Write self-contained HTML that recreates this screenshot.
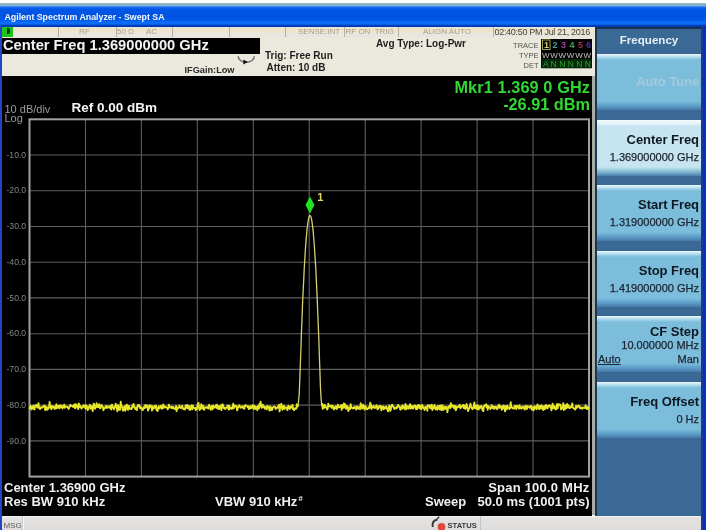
<!DOCTYPE html>
<html><head><meta charset="utf-8">
<style>
html,body{margin:0;padding:0;}
body{width:711px;height:530px;position:relative;overflow:hidden;background:#fff;font-family:"Liberation Sans",sans-serif;}
.a{position:absolute;}
.t{position:absolute;white-space:nowrap;line-height:normal;}
#title{left:0;top:3px;width:706.3px;height:23.5px;background:linear-gradient(to bottom,#b0c8d8 0px,#88b0c8 0.8px,#88b0c8 2.6px,#1a70f8 4px,#0058e8 6px,#0052e0 12px,#0058e8 17px,#0a6cf8 19px,#0a6cf8 21px,#0040b8 22.6px,#0038b0 23.5px);}
#lframe{left:0;top:26px;width:2px;height:504px;background:#2444c8;}
#rframe1{left:701.3px;top:26px;width:2px;height:504px;background:#1a3898;}
#rframe2{left:703.3px;top:26px;width:3px;height:504px;background:#0a2ec4;}
#strip{left:2px;top:26.5px;width:592.5px;height:10.5px;background:linear-gradient(to bottom,#dce6ea 0px,#ece4d0 1.2px,#eee4cc 5px,#e8e8e0 6.5px,#e6e6de 9.5px,#b8b4a8 10.5px);}
.sep{position:absolute;top:0;width:1px;height:10.5px;background:#b8b0a0;}
#green{left:1.8px;top:26.6px;width:11px;height:10.6px;background:#1cc41c;}
#hdr{left:2px;top:37px;width:592.5px;height:39px;background:#ebe9de;}
#cf{left:2px;top:38.4px;width:257.5px;height:16px;background:#000;}
#black{left:2px;top:76px;width:590px;height:439.5px;background:#000;}
#vsep{left:592px;top:76px;width:2.6px;height:439px;background:#a4aca4;}
#panel{left:594.5px;top:26.5px;width:107px;height:489px;background:#3a6996;border-left:2px solid #1e3450;box-sizing:border-box;}
#ptop{left:594.5px;top:26.5px;width:107px;height:2.5px;background:#1a3050;}
.btn{position:absolute;left:596.5px;width:104.8px;height:56px;background:linear-gradient(to bottom,#eef8fc 0px,#b0dcee 3px,#7cbddc 6px,#7cbddc 47px,#5a9cc8 52px,#4878a8 56px);}
.btn.sel{background:linear-gradient(to bottom,#f4fafc 0px,#e4f2f8 4px,#c6e5f0 6px,#c6e5f0 47px,#8cc0d8 51px,#4a80b0 56px);}
#status{left:2px;top:515.5px;width:699.5px;height:14.5px;background:linear-gradient(to bottom,#f4f4f2 0px,#e4e2e0 2px,#e0dedd 12px,#d8d4e0 15px);}
#tbox{left:541px;top:39.2px;width:51px;height:29.3px;background:#000;}
#wrap{position:absolute;left:0;top:0;width:711px;height:530px;overflow:hidden;filter:blur(0.35px);}
</style></head><body><div id="wrap">
<div class="a" id="title"></div>
<div class="a" id="lframe"></div>
<div class="a" id="strip">
  <div class="sep" style="left:55.5px"></div>
  <div class="sep" style="left:113.5px"></div>
  <div class="sep" style="left:169.5px"></div>
  <div class="sep" style="left:226.5px"></div>
  <div class="sep" style="left:282.5px"></div>
  <div class="sep" style="left:342px"></div>
  <div class="sep" style="left:395.5px"></div>
  <div class="sep" style="left:490.5px"></div>
</div>
<div class="a" id="green"></div><div class="a" style="left:6.8px;top:28.3px;width:3.6px;height:6px;background:#0a3a0a;border-radius:0 2px 2px 0"></div>
<div class="a" id="hdr"></div>
<div class="a" id="cf"></div>
<div class="a" id="tbox"></div>
<div class="a" id="black"></div>
<div class="a" id="vsep"></div>
<div class="a" id="panel"></div>
<div class="a" id="ptop"></div>
<div class="btn" style="top:54.0px"></div>
<div class="t" style="right:11.5px;top:74.3px;font-size:13px;color:#a6cadc;font-weight:bold">Auto Tune</div>
<div class="btn sel" style="top:119.6px"></div>
<div class="t" style="right:12.0px;top:131.5px;font-size:13px;color:#0e1822;font-weight:bold;letter-spacing:-0.05px">Center Freq</div>
<div class="t" style="right:12.0px;top:150.7px;font-size:11px;color:#1a2430;-webkit-text-stroke:0.25px #1a2430">1.369000000 GHz</div>
<div class="btn" style="top:185.2px"></div>
<div class="t" style="right:12.0px;top:197.1px;font-size:13px;color:#0e1822;font-weight:bold;letter-spacing:-0.05px">Start Freq</div>
<div class="t" style="right:12.0px;top:216.3px;font-size:11px;color:#1a2430;-webkit-text-stroke:0.25px #1a2430">1.319000000 GHz</div>
<div class="btn" style="top:250.8px"></div>
<div class="t" style="right:12.0px;top:262.7px;font-size:13px;color:#0e1822;font-weight:bold;letter-spacing:-0.05px">Stop Freq</div>
<div class="t" style="right:12.0px;top:281.9px;font-size:11px;color:#1a2430;-webkit-text-stroke:0.25px #1a2430">1.419000000 GHz</div>
<div class="btn" style="top:316.4px"></div>
<div class="t" style="right:12.0px;top:324.0px;font-size:13px;color:#0e1822;font-weight:bold">CF Step</div>
<div class="t" style="right:12.0px;top:339.1px;font-size:11px;color:#1a2430;-webkit-text-stroke:0.25px #1a2430">10.000000 MHz</div>
<div class="t" style="left:598.0px;top:352.9px;font-size:11px;color:#1a2430;text-decoration:underline;-webkit-text-stroke:0.25px #1a2430">Auto</div>
<div class="t" style="right:12.0px;top:352.9px;font-size:11px;color:#1a2430;-webkit-text-stroke:0.25px #1a2430">Man</div>
<div class="btn" style="top:382.0px"></div>
<div class="t" style="right:12.0px;top:393.9px;font-size:13px;color:#0e1822;font-weight:bold;letter-spacing:-0.05px">Freq Offset</div>
<div class="t" style="right:12.0px;top:413.1px;font-size:11px;color:#1a2430;-webkit-text-stroke:0.25px #1a2430">0 Hz</div>
<div class="a" id="status"></div>
<div class="a" id="rframe1"></div>
<div class="a" id="rframe2"></div>
<div class="a" style="left:22px;top:516px;width:1px;height:14px;background:#c8c8c8"></div><div class="a" style="left:23px;top:516px;width:1px;height:14px;background:#f8f8f8"></div>
<div class="a" style="left:480px;top:516px;width:1px;height:14px;background:#c4c4c4"></div>
<svg class="a" style="left:0;top:0" width="711" height="530" viewBox="0 0 711 530">
<g stroke="#5e5e5e" stroke-width="1.1">
<line x1="85.5" y1="119.3" x2="85.5" y2="476.6"/>
<line x1="29.5" y1="155.0" x2="589.0" y2="155.0"/>
<line x1="141.4" y1="119.3" x2="141.4" y2="476.6"/>
<line x1="29.5" y1="190.8" x2="589.0" y2="190.8"/>
<line x1="197.3" y1="119.3" x2="197.3" y2="476.6"/>
<line x1="29.5" y1="226.5" x2="589.0" y2="226.5"/>
<line x1="253.3" y1="119.3" x2="253.3" y2="476.6"/>
<line x1="29.5" y1="262.2" x2="589.0" y2="262.2"/>
<line x1="309.2" y1="119.3" x2="309.2" y2="476.6"/>
<line x1="29.5" y1="297.9" x2="589.0" y2="297.9"/>
<line x1="365.2" y1="119.3" x2="365.2" y2="476.6"/>
<line x1="29.5" y1="333.7" x2="589.0" y2="333.7"/>
<line x1="421.1" y1="119.3" x2="421.1" y2="476.6"/>
<line x1="29.5" y1="369.4" x2="589.0" y2="369.4"/>
<line x1="477.1" y1="119.3" x2="477.1" y2="476.6"/>
<line x1="29.5" y1="405.1" x2="589.0" y2="405.1"/>
<line x1="533.0" y1="119.3" x2="533.0" y2="476.6"/>
<line x1="29.5" y1="440.9" x2="589.0" y2="440.9"/>
</g>
<rect x="29.5" y="119.3" width="559.5" height="357.3" fill="none" stroke="#a0a0a0" stroke-width="2"/>
<polyline points="297.5,407.3 298.1,406.1 298.6,400.0 299.2,394.7 299.7,382.0 300.3,365.6 300.9,349.5 301.4,333.7 302.0,318.9 302.5,305.0 303.1,292.1 303.7,280.2 304.2,269.3 304.8,259.4 305.3,250.5 305.9,242.6 306.5,235.7 307.0,229.8 307.6,224.9 308.1,221.1 308.7,218.2 309.2,216.4 309.8,215.5 310.4,215.7 310.9,216.8 311.5,219.0 312.0,222.2 312.6,226.4 313.2,231.6 313.7,237.8 314.3,245.0 314.8,253.2 315.4,262.4 316.0,272.6 316.5,283.9 317.1,296.1 317.6,309.3 318.2,323.5 318.8,338.7 319.3,354.6 319.9,370.8 320.4,386.2 321.0,397.5 321.6,404.1 322.1,403.1" fill="none" stroke="#d4d070" stroke-width="1.3"/>
<polyline points="29.5,409.3 30.1,406.7 30.6,405.7 31.2,408.1 31.7,409.4 32.3,407.4 32.9,406.5 33.4,405.5 34.0,409.2 34.5,409.4 35.1,406.1 35.7,406.5 36.2,404.8 36.8,405.7 37.3,407.4 37.9,407.7 38.5,403.2 39.0,407.7 39.6,408.5 40.1,409.1 40.7,407.1 41.2,407.1 41.8,407.8 42.4,407.4 42.9,406.8 43.5,406.2 44.0,405.5 44.6,406.9 45.2,410.2 45.7,406.2 46.3,409.6 46.8,407.6 47.4,409.7 48.0,407.3 48.5,408.5 49.1,406.9 49.6,402.0 50.2,407.4 50.8,405.9 51.3,409.4 51.9,407.7 52.4,406.2 53.0,407.4 53.6,406.7 54.1,407.1 54.7,408.9 55.2,406.4 55.8,408.6 56.4,404.3 56.9,408.1 57.5,406.2 58.0,407.3 58.6,405.8 59.2,408.3 59.7,405.7 60.3,407.5 60.8,405.3 61.4,406.3 62.0,407.1 62.5,408.5 63.1,406.0 63.6,406.5 64.2,404.6 64.7,407.9 65.3,406.4 65.9,406.5 66.4,406.8 67.0,406.9 67.5,407.0 68.1,408.2 68.7,408.9 69.2,407.9 69.8,406.3 70.3,404.9 70.9,405.7 71.5,405.6 72.0,406.0 72.6,406.2 73.1,407.0 73.7,406.0 74.3,404.4 74.8,407.8 75.4,408.4 75.9,404.1 76.5,406.9 77.1,405.7 77.6,405.9 78.2,409.1 78.7,403.4 79.3,404.4 79.9,407.0 80.4,406.1 81.0,407.1 81.5,408.7 82.1,407.5 82.7,406.7 83.2,405.5 83.8,406.1 84.3,407.2 84.9,405.1 85.5,408.5 86.0,406.0 86.6,405.5 87.1,407.8 87.7,410.2 88.2,408.7 88.8,406.9 89.4,406.4 89.9,404.8 90.5,408.9 91.0,407.3 91.6,406.2 92.2,407.5 92.7,411.1 93.3,406.0 93.8,403.6 94.4,405.7 95.0,408.8 95.5,407.9 96.1,406.9 96.6,403.3 97.2,406.3 97.8,407.1 98.3,404.8 98.9,407.4 99.4,404.3 100.0,408.4 100.6,408.0 101.1,406.1 101.7,405.0 102.2,406.2 102.8,406.8 103.4,410.2 103.9,408.4 104.5,408.3 105.0,408.1 105.6,406.3 106.2,407.8 106.7,406.0 107.3,407.2 107.8,407.8 108.4,407.1 108.9,406.6 109.5,405.9 110.1,408.1 110.6,407.7 111.2,409.5 111.7,404.7 112.3,404.9 112.9,407.6 113.4,408.1 114.0,409.3 114.5,407.0 115.1,407.0 115.7,403.8 116.2,406.9 116.8,408.5 117.3,411.2 117.9,405.0 118.5,407.0 119.0,409.9 119.6,407.0 120.1,409.9 120.7,401.7 121.3,405.5 121.8,406.4 122.4,407.6 122.9,410.7 123.5,407.5 124.1,409.8 124.6,406.3 125.2,410.7 125.7,408.7 126.3,405.3 126.9,404.6 127.4,409.2 128.0,409.8 128.5,405.9 129.1,405.9 129.7,408.9 130.2,408.4 130.8,408.4 131.3,409.2 131.9,408.4 132.4,405.3 133.0,406.2 133.6,404.0 134.1,407.4 134.7,407.5 135.2,408.9 135.8,407.5 136.4,409.4 136.9,410.1 137.5,406.2 138.0,405.0 138.6,405.9 139.2,405.1 139.7,406.9 140.3,408.4 140.8,407.1 141.4,407.9 142.0,409.1 142.5,410.0 143.1,409.7 143.6,407.3 144.2,407.0 144.8,408.0 145.3,405.0 145.9,407.0 146.4,406.3 147.0,405.3 147.6,408.6 148.1,410.5 148.7,406.1 149.2,408.4 149.8,405.2 150.4,406.7 150.9,405.7 151.5,406.1 152.0,410.6 152.6,406.1 153.1,408.4 153.7,408.5 154.3,408.0 154.8,406.0 155.4,405.9 155.9,405.7 156.5,410.0 157.1,408.2 157.6,411.1 158.2,407.4 158.7,406.3 159.3,408.5 159.9,406.9 160.4,406.9 161.0,405.7 161.5,408.6 162.1,408.6 162.7,408.5 163.2,404.5 163.8,405.5 164.3,407.5 164.9,406.9 165.5,407.1 166.0,407.0 166.6,407.6 167.1,407.8 167.7,409.3 168.3,408.3 168.8,404.6 169.4,406.4 169.9,407.2 170.5,407.6 171.1,407.2 171.6,406.7 172.2,408.3 172.7,407.0 173.3,406.9 173.9,408.5 174.4,408.6 175.0,408.9 175.5,409.0 176.1,405.9 176.6,411.1 177.2,407.7 177.8,408.3 178.3,408.3 178.9,407.1 179.4,405.5 180.0,407.2 180.6,407.5 181.1,408.3 181.7,407.5 182.2,405.8 182.8,407.9 183.4,409.1 183.9,409.3 184.5,409.1 185.0,409.5 185.6,405.5 186.2,406.7 186.7,407.7 187.3,404.9 187.8,408.3 188.4,406.1 189.0,406.0 189.5,409.8 190.1,409.8 190.6,408.8 191.2,405.8 191.8,405.2 192.3,409.3 192.9,405.6 193.4,407.9 194.0,407.9 194.6,408.2 195.1,407.8 195.7,410.2 196.2,408.9 196.8,409.3 197.3,406.5 197.9,403.9 198.5,402.9 199.0,407.8 199.6,410.1 200.1,407.9 200.7,408.8 201.3,404.1 201.8,406.4 202.4,408.5 202.9,405.8 203.5,406.4 204.1,409.9 204.6,408.1 205.2,407.7 205.7,407.3 206.3,407.1 206.9,407.8 207.4,407.0 208.0,408.2 208.5,408.7 209.1,404.8 209.7,406.7 210.2,406.6 210.8,409.8 211.3,407.6 211.9,406.0 212.5,409.4 213.0,405.5 213.6,407.9 214.1,406.6 214.7,407.5 215.3,406.9 215.8,405.3 216.4,407.9 216.9,404.8 217.5,408.5 218.1,408.8 218.6,406.1 219.2,409.0 219.7,407.9 220.3,405.8 220.8,405.3 221.4,410.1 222.0,406.5 222.5,404.3 223.1,405.4 223.6,407.7 224.2,408.2 224.8,407.8 225.3,409.1 225.9,407.7 226.4,407.6 227.0,407.5 227.6,405.4 228.1,407.7 228.7,409.6 229.2,405.6 229.8,409.0 230.4,408.0 230.9,407.5 231.5,407.8 232.0,408.9 232.6,407.7 233.2,403.8 233.7,408.3 234.3,407.5 234.8,405.5 235.4,406.1 236.0,406.1 236.5,405.9 237.1,410.4 237.6,408.7 238.2,407.1 238.8,406.5 239.3,405.2 239.9,406.5 240.4,407.7 241.0,407.2 241.6,407.6 242.1,406.9 242.7,406.2 243.2,407.8 243.8,408.6 244.3,408.7 244.9,405.5 245.5,405.2 246.0,405.7 246.6,405.9 247.1,405.9 247.7,407.3 248.3,406.2 248.8,409.0 249.4,407.6 249.9,408.5 250.5,406.1 251.1,408.2 251.6,407.5 252.2,406.6 252.7,405.1 253.3,408.6 253.9,408.8 254.4,406.0 255.0,409.1 255.5,406.6 256.1,408.2 256.7,407.5 257.2,410.2 257.8,406.1 258.3,408.1 258.9,408.7 259.5,403.9 260.0,406.1 260.6,401.6 261.1,406.6 261.7,407.8 262.3,407.1 262.8,404.7 263.4,407.3 263.9,406.6 264.5,406.5 265.0,408.7 265.6,407.1 266.2,408.1 266.7,409.3 267.3,405.9 267.8,406.2 268.4,407.2 269.0,408.7 269.5,410.5 270.1,406.5 270.6,407.4 271.2,410.0 271.8,407.4 272.3,409.7 272.9,407.3 273.4,407.1 274.0,406.7 274.6,406.9 275.1,407.0 275.7,409.1 276.2,407.9 276.8,408.1 277.4,407.7 277.9,406.8 278.5,406.3 279.0,404.7 279.6,411.4 280.2,406.6 280.7,407.6 281.3,403.6 281.8,405.8 282.4,409.9 283.0,406.6 283.5,408.1 284.1,405.7 284.6,409.0 285.2,407.4 285.8,407.5 286.3,407.4 286.9,408.2 287.4,410.2 288.0,406.5 288.5,405.7 289.1,407.4 289.7,408.9 290.2,407.0 290.8,406.4 291.3,407.6 291.9,407.3 292.5,405.0 293.0,409.1 293.6,408.2 294.1,410.3 294.7,408.4 295.3,408.5 295.8,408.8 296.4,408.4 296.9,404.3 297.5,407.3" fill="none" stroke="#e6e62a" stroke-width="1.9" stroke-linejoin="round"/>
<polyline points="322.1,403.1 322.7,408.9 323.2,407.8 323.8,405.2 324.4,407.7 324.9,405.0 325.5,407.4 326.0,407.0 326.6,407.9 327.2,409.5 327.7,408.8 328.3,403.7 328.8,406.2 329.4,406.3 330.0,405.8 330.5,406.4 331.1,405.6 331.6,407.7 332.2,407.6 332.7,405.7 333.3,407.9 333.9,409.4 334.4,407.6 335.0,408.2 335.5,406.3 336.1,408.4 336.7,409.0 337.2,407.8 337.8,404.8 338.3,407.4 338.9,407.0 339.5,407.3 340.0,406.8 340.6,405.8 341.1,405.0 341.7,409.9 342.3,405.1 342.8,407.3 343.4,407.8 343.9,403.4 344.5,407.6 345.1,404.2 345.6,405.7 346.2,408.9 346.7,406.5 347.3,406.1 347.9,407.5 348.4,411.0 349.0,407.8 349.5,407.6 350.1,409.1 350.7,404.3 351.2,407.7 351.8,407.9 352.3,407.8 352.9,408.5 353.5,408.5 354.0,407.1 354.6,406.8 355.1,408.1 355.7,407.4 356.2,409.5 356.8,406.4 357.4,408.5 357.9,406.9 358.5,408.7 359.0,408.1 359.6,406.9 360.2,409.2 360.7,403.3 361.3,407.3 361.8,407.4 362.4,408.5 363.0,404.7 363.5,405.1 364.1,406.8 364.6,409.5 365.2,408.1 365.8,406.3 366.3,408.1 366.9,409.2 367.4,409.2 368.0,408.5 368.6,407.3 369.1,408.3 369.7,407.3 370.2,402.8 370.8,404.4 371.4,409.0 371.9,406.7 372.5,407.1 373.0,407.5 373.6,405.6 374.2,407.8 374.7,407.8 375.3,407.9 375.8,407.4 376.4,405.2 376.9,406.0 377.5,409.4 378.1,408.0 378.6,408.6 379.2,406.0 379.7,406.9 380.3,405.9 380.9,407.4 381.4,410.4 382.0,406.6 382.5,406.9 383.1,406.5 383.7,409.4 384.2,407.2 384.8,408.4 385.3,408.4 385.9,406.7 386.5,406.7 387.0,408.7 387.6,410.0 388.1,411.3 388.7,408.2 389.3,405.5 389.8,407.4 390.4,410.9 390.9,408.7 391.5,406.6 392.1,404.6 392.6,405.4 393.2,406.7 393.7,407.0 394.3,409.0 394.9,408.0 395.4,407.8 396.0,408.5 396.5,407.2 397.1,407.9 397.7,406.7 398.2,405.0 398.8,406.1 399.3,406.6 399.9,407.7 400.4,409.7 401.0,407.5 401.6,406.4 402.1,408.9 402.7,405.3 403.2,407.8 403.8,406.7 404.4,407.8 404.9,409.3 405.5,404.0 406.0,409.2 406.6,405.8 407.2,408.2 407.7,406.8 408.3,408.6 408.8,408.0 409.4,405.8 410.0,404.2 410.5,408.6 411.1,407.3 411.6,405.8 412.2,408.3 412.8,406.1 413.3,408.5 413.9,406.3 414.4,406.6 415.0,405.3 415.6,406.7 416.1,409.2 416.7,406.2 417.2,409.1 417.8,406.1 418.4,404.9 418.9,406.3 419.5,408.2 420.0,405.4 420.6,407.0 421.1,409.3 421.7,407.9 422.3,405.0 422.8,407.8 423.4,407.1 423.9,407.8 424.5,410.0 425.1,408.1 425.6,406.7 426.2,406.9 426.7,407.6 427.3,410.7 427.9,405.3 428.4,406.1 429.0,405.6 429.5,405.2 430.1,408.0 430.7,408.3 431.2,406.8 431.8,404.6 432.3,410.0 432.9,407.7 433.5,408.4 434.0,406.4 434.6,404.9 435.1,407.8 435.7,409.3 436.3,407.2 436.8,407.7 437.4,409.8 437.9,405.9 438.5,408.1 439.1,406.2 439.6,409.4 440.2,405.5 440.7,409.6 441.3,405.6 441.9,410.2 442.4,405.1 443.0,407.9 443.5,409.8 444.1,407.7 444.6,406.7 445.2,408.9 445.8,408.1 446.3,406.9 446.9,407.6 447.4,412.2 448.0,408.0 448.6,406.6 449.1,406.8 449.7,405.7 450.2,408.4 450.8,403.2 451.4,406.0 451.9,406.8 452.5,405.5 453.0,405.7 453.6,407.1 454.2,408.3 454.7,405.6 455.3,406.6 455.8,410.3 456.4,409.1 457.0,406.5 457.5,407.1 458.1,406.8 458.6,406.3 459.2,407.0 459.8,404.7 460.3,408.2 460.9,407.9 461.4,406.8 462.0,406.1 462.6,406.0 463.1,404.9 463.7,408.1 464.2,405.4 464.8,406.5 465.4,409.0 465.9,407.5 466.5,403.9 467.0,406.0 467.6,408.0 468.1,411.1 468.7,408.5 469.3,408.4 469.8,407.2 470.4,403.6 470.9,406.1 471.5,406.8 472.1,408.8 472.6,409.2 473.2,407.6 473.7,408.0 474.3,402.4 474.9,407.9 475.4,408.3 476.0,405.5 476.5,407.2 477.1,409.3 477.7,405.2 478.2,407.8 478.8,409.4 479.3,406.8 479.9,406.5 480.5,407.8 481.0,406.2 481.6,406.0 482.1,408.7 482.7,410.6 483.3,411.1 483.8,407.5 484.4,405.3 484.9,405.7 485.5,405.0 486.1,404.3 486.6,407.3 487.2,405.6 487.7,409.7 488.3,406.2 488.8,406.7 489.4,407.4 490.0,408.0 490.5,409.1 491.1,407.1 491.6,405.2 492.2,407.9 492.8,406.4 493.3,408.4 493.9,406.9 494.4,408.9 495.0,406.7 495.6,407.6 496.1,406.8 496.7,408.3 497.2,409.2 497.8,407.8 498.4,405.6 498.9,404.7 499.5,407.8 500.0,406.0 500.6,406.1 501.2,406.7 501.7,409.8 502.3,406.8 502.8,408.8 503.4,405.4 504.0,406.0 504.5,406.3 505.1,411.4 505.6,406.3 506.2,406.2 506.8,409.3 507.3,405.7 507.9,407.2 508.4,407.6 509.0,408.4 509.6,408.9 510.1,408.0 510.7,402.3 511.2,407.0 511.8,406.9 512.3,408.3 512.9,408.3 513.5,408.2 514.0,408.7 514.6,405.9 515.1,407.7 515.7,405.9 516.3,409.1 516.8,405.8 517.4,407.3 517.9,406.2 518.5,407.5 519.1,408.7 519.6,405.3 520.2,408.0 520.7,407.5 521.3,408.7 521.9,407.0 522.4,407.9 523.0,406.8 523.5,406.7 524.1,408.4 524.7,409.6 525.2,406.6 525.8,405.8 526.3,406.2 526.9,409.1 527.5,406.3 528.0,406.7 528.6,406.8 529.1,406.6 529.7,407.8 530.3,406.9 530.8,405.8 531.4,408.1 531.9,409.6 532.5,407.5 533.0,407.0 533.6,410.3 534.2,408.4 534.7,406.3 535.3,407.5 535.8,407.1 536.4,409.3 537.0,405.8 537.5,404.5 538.1,407.6 538.6,408.5 539.2,409.1 539.8,405.9 540.3,407.1 540.9,408.6 541.4,405.3 542.0,406.1 542.6,406.3 543.1,410.1 543.7,407.5 544.2,406.3 544.8,409.3 545.4,405.8 545.9,405.0 546.5,405.6 547.0,408.4 547.6,408.4 548.2,405.8 548.7,405.7 549.3,405.3 549.8,405.4 550.4,407.4 551.0,407.9 551.5,410.3 552.1,406.0 552.6,403.6 553.2,408.0 553.8,408.0 554.3,406.2 554.9,406.7 555.4,409.5 556.0,408.4 556.5,409.0 557.1,404.0 557.7,408.4 558.2,405.9 558.8,404.2 559.3,404.2 559.9,405.0 560.5,404.7 561.0,409.3 561.6,407.8 562.1,408.5 562.7,407.8 563.3,403.1 563.8,410.0 564.4,406.4 564.9,409.3 565.5,405.1 566.1,405.2 566.6,408.1 567.2,404.0 567.7,407.2 568.3,405.2 568.9,406.8 569.4,408.2 570.0,407.9 570.5,407.5 571.1,406.3 571.7,407.1 572.2,403.5 572.8,407.6 573.3,408.0 573.9,408.4 574.5,408.5 575.0,409.6 575.6,408.9 576.1,405.8 576.7,407.2 577.3,407.6 577.8,406.7 578.4,405.6 578.9,406.3 579.5,406.0 580.0,408.2 580.6,407.7 581.2,408.5 581.7,407.4 582.3,408.6 582.8,407.9 583.4,407.6 584.0,407.6 584.5,407.7 585.1,408.1 585.6,405.2 586.2,407.8 586.8,408.9 587.3,407.0 587.9,409.0 588.4,409.0 589.0,407.1" fill="none" stroke="#e6e62a" stroke-width="1.9" stroke-linejoin="round"/>
<path d="M310 196.5 L314.5 205 L310 213.5 L305.5 205 Z" fill="#20e020"/>
<path d="M238.2 56.3 C238.2 64.2 254.3 64.2 254.3 56.3" fill="none" stroke="#6a6a6a" stroke-width="1.4"/>
<path d="M243.4 59.6 L247.6 62 L243.4 64.4 Z" fill="#0a0a0a"/>
<g font-family="Liberation Sans" font-size="9" font-weight="bold">
<rect x="542.5" y="40" width="7.5" height="9.5" fill="none" stroke="#a0a040" stroke-width="1"/>
<text x="544" y="48" fill="#d0d080">1</text>
<text x="552.5" y="48" fill="#40a0a0">2</text>
<text x="561" y="48" fill="#a040a0">3</text>
<text x="569.5" y="48" fill="#40a060">4</text>
<text x="578" y="48" fill="#a03050">5</text>
<text x="586" y="48" fill="#5030b0">6</text>
<text x="542" y="57.5" fill="#c8c8c8" font-size="8" font-weight="normal" textLength="49">WWWWWW</text>
<rect x="541.5" y="59" width="50" height="9.3" fill="#022a06"/>
<text x="543" y="67" fill="#30a030" font-size="8.5" font-weight="normal" textLength="48">A N N N N N</text>
</g>
<path d="M437.5 519.5 Q431.5 520.5 432.8 527" fill="none" stroke="#383838" stroke-width="1.9"/><path d="M437 519 L439.3 516.8" stroke="#303030" stroke-width="1.2"/>
<circle cx="441.5" cy="527" r="3.9" fill="#e04838"/>
</svg>
<div class="t" style="left:4.5px;top:11.8px;font-size:8.8px;color:#f4f8ff;font-weight:bold">Agilent Spectrum Analyzer - Swept SA</div>
<div class="t" style="left:79.0px;top:27.1px;font-size:8px;color:#a89f8c">RF</div>
<div class="t" style="left:117.0px;top:27.1px;font-size:8px;color:#a89f8c">50 Ω</div>
<div class="t" style="left:146.0px;top:27.1px;font-size:8px;color:#a89f8c">AC</div>
<div class="t" style="left:298.0px;top:27.1px;font-size:8px;color:#a89f8c">SENSE:INT</div>
<div class="t" style="left:345.5px;top:27.1px;font-size:8px;color:#a89f8c">RF ON&nbsp; TRIG</div>
<div class="t" style="left:423.0px;top:27.1px;font-size:8px;color:#a89f8c">ALIGN AUTO</div>
<div class="t" style="left:494.5px;top:26.7px;font-size:9px;color:#4a4234;letter-spacing:-0.3px">02:40:50 PM Jul 21, 2016</div>
<div class="t" style="left:184.5px;top:64.7px;font-size:9.2px;color:#2a2a2a;font-weight:bold">IFGain:Low</div>
<div class="t" style="left:265.0px;top:50.1px;font-size:10px;color:#1e1e1e;font-weight:bold">Trig: Free Run</div>
<div class="t" style="left:266.5px;top:61.8px;font-size:10px;color:#1e1e1e;font-weight:bold">Atten: 10 dB</div>
<div class="t" style="left:376.0px;top:38.3px;font-size:10px;color:#1e1e1e;font-weight:bold">Avg Type: Log-Pwr</div>
<div class="t" style="right:172.5px;top:40.6px;font-size:7.5px;color:#505050">TRACE</div>
<div class="t" style="right:172.5px;top:50.6px;font-size:7.5px;color:#505050">TYPE</div>
<div class="t" style="right:172.5px;top:60.6px;font-size:7.5px;color:#505050">DET</div>
<div class="t" style="left:3.0px;top:37.1px;font-size:14.7px;color:#f4f4f4;font-weight:bold">Center Freq 1.369000000 GHz</div>
<div class="t" style="left:4.5px;top:102.5px;font-size:11px;color:#9a9a9a">10 dB/div</div>
<div class="t" style="left:4.5px;top:112.4px;font-size:11px;color:#9a9a9a">Log</div>
<div class="t" style="left:71.5px;top:100.4px;font-size:13.5px;color:#f4f4f4;font-weight:bold">Ref 0.00 dBm</div>
<div class="t" style="left:6.5px;top:149.7px;font-size:8.6px;color:#858585">-10.0</div>
<div class="t" style="left:6.5px;top:185.4px;font-size:8.6px;color:#858585">-20.0</div>
<div class="t" style="left:6.5px;top:221.2px;font-size:8.6px;color:#858585">-30.0</div>
<div class="t" style="left:6.5px;top:256.9px;font-size:8.6px;color:#858585">-40.0</div>
<div class="t" style="left:6.5px;top:292.6px;font-size:8.6px;color:#858585">-50.0</div>
<div class="t" style="left:6.5px;top:328.4px;font-size:8.6px;color:#858585">-60.0</div>
<div class="t" style="left:6.5px;top:364.1px;font-size:8.6px;color:#858585">-70.0</div>
<div class="t" style="left:6.5px;top:399.8px;font-size:8.6px;color:#858585">-80.0</div>
<div class="t" style="left:6.5px;top:435.6px;font-size:8.6px;color:#858585">-90.0</div>
<div class="t" style="right:121.0px;top:78.1px;font-size:16.3px;color:#30d830;font-weight:bold;letter-spacing:0.1px">Mkr1 1.369 0 GHz</div>
<div class="t" style="right:121.0px;top:95.2px;font-size:16.3px;color:#30d830;font-weight:bold">-26.91 dBm</div>
<div class="t" style="left:317.3px;top:190.5px;font-size:11px;color:#dcd860;font-weight:bold">1</div>
<div class="t" style="left:4.0px;top:479.6px;font-size:13px;color:#f0f0f0;font-weight:bold">Center 1.36900 GHz</div>
<div class="t" style="left:4.0px;top:494.3px;font-size:13px;color:#f0f0f0;font-weight:bold">Res BW 910 kHz</div>
<div class="t" style="left:215.0px;top:494.3px;font-size:13px;color:#f0f0f0;font-weight:bold">VBW 910 kHz<span style="font-size:7.5px;vertical-align:5px;margin-left:1px">#</span></div>
<div class="t" style="right:121.5px;top:479.6px;font-size:13px;color:#f0f0f0;font-weight:bold;letter-spacing:0.22px">Span 100.0 MHz</div>
<div class="t" style="left:425.0px;top:494.3px;font-size:13px;color:#f0f0f0;font-weight:bold">Sweep</div>
<div class="t" style="right:121.5px;top:494.3px;font-size:13px;color:#f0f0f0;font-weight:bold">50.0 ms (1001 pts)</div>
<div class="t" style="left:3.5px;top:520.6px;font-size:8px;color:#5c5c5c">MSG</div>
<div class="t" style="left:447.5px;top:520.6px;font-size:7.6px;color:#3a3a3a;font-weight:bold">STATUS</div>
<div class="t" style="left:649.0px;top:33.1px;font-size:11.6px;color:#e6eef6;font-weight:bold;width:0;display:flex;justify-content:center">Frequency</div>
</div></body></html>
